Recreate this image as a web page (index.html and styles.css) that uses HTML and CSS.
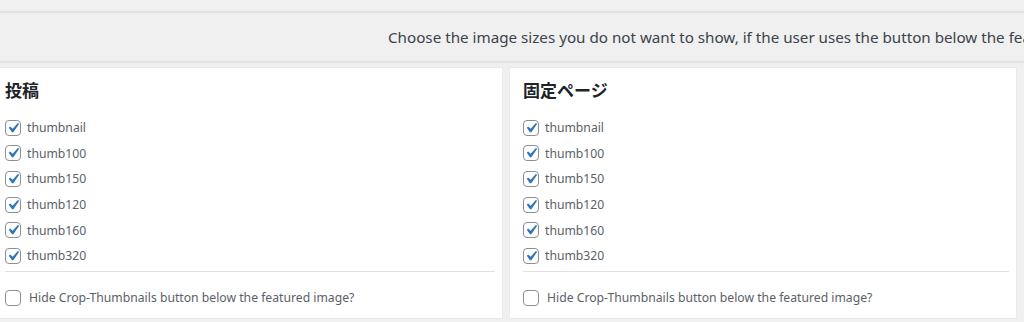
FILE: index.html
```html
<!DOCTYPE html>
<html lang="ja">
<head>
    <meta charset="UTF-8">
    <title>Crop-Thumbnails</title>
    <link rel="stylesheet" href="styles.css">
</head>
<body>
    <div class="notice">
        <p>Choose the image sizes you do not want to show, if the user uses the button below the featured image box.</p>
    </div>
    <div class="panels">
        <section class="panel">
            <h2>投稿</h2>
            <ul class="sizes">
                <li><label><input type="checkbox" checked> thumbnail</label></li>
                <li><label><input type="checkbox" checked> thumb100</label></li>
                <li><label><input type="checkbox" checked> thumb150</label></li>
                <li><label><input type="checkbox" checked> thumb120</label></li>
                <li><label><input type="checkbox" checked> thumb160</label></li>
                <li><label><input type="checkbox" checked> thumb320</label></li>
            </ul>
            <div class="hide-row">
                <label><input type="checkbox"> Hide Crop-Thumbnails button below the featured image?</label>
            </div>
        </section>
        <section class="panel">
            <h2>固定ページ</h2>
            <ul class="sizes">
                <li><label><input type="checkbox" checked> thumbnail</label></li>
                <li><label><input type="checkbox" checked> thumb100</label></li>
                <li><label><input type="checkbox" checked> thumb150</label></li>
                <li><label><input type="checkbox" checked> thumb120</label></li>
                <li><label><input type="checkbox" checked> thumb160</label></li>
                <li><label><input type="checkbox" checked> thumb320</label></li>
            </ul>
            <div class="hide-row">
                <label><input type="checkbox"> Hide Crop-Thumbnails button below the featured image?</label>
            </div>
        </section>
    </div>
</body>
</html>
```

FILE: styles.css
```css
body {
    margin: 0;
    background-color: #f0f0f1;
    font-family: "Noto Sans", "Noto Sans CJK JP", sans-serif;
    color: #3c434a;
    overflow: hidden;
}
.notice {
    margin-top: 11px;
    height: 48px;
    border-top: 2px solid #e3e3e5;
    border-bottom: 2px solid #e3e3e5;
    padding-left: 388px;
    display: flex;
    align-items: center;
    white-space: nowrap;
}
.notice p {
    margin: 0;
    font-size: 15.2px;
}
.panels {
    display: grid;
    grid-template-columns: 512px 508px;
    gap: 6px;
    margin: 4px 0 0 -9px;
}
.panel {
    background: #fff;
    border: 1px solid #eaeaec;
    padding: 11px 7px 9px 13px;
    height: 230px;
}
.panel h2 {
    margin: 0 0 12px;
    font-size: 17px;
    line-height: 24px;
    font-weight: bold;
    color: #1d2327;
}
.sizes {
    list-style: none;
    margin: 0;
    padding: 0 0 2px;
    border-bottom: 1px solid #e2e2e4;
}
.sizes li {
    height: 25.6px;
    display: flex;
    align-items: center;
}
label {
    display: flex;
    align-items: center;
    gap: 6px;
    font-size: 12.2px;
    color: #5a6168;
}
.hide-row {
    margin-top: 13px;
    height: 26px;
    display: flex;
    align-items: center;
}
.hide-row label {
    gap: 8px;
}
input[type="checkbox"] {
    appearance: none;
    margin: 0;
    width: 16px;
    height: 16px;
    border: 1px solid #8c8f94;
    border-radius: 4px;
    background: #fff;
    flex: none;
}
input[type="checkbox"]:checked {
    background: #fff url("data:image/svg+xml;utf8,<svg xmlns='http://www.w3.org/2000/svg' viewBox='0 0 20 20'><path fill='%232f76b8' d='M14.83 4.89l1.34.94-5.81 8.38H9.02L5.78 9.67l1.34-1.25 2.57 2.4z'/></svg>") center / 20px 20px no-repeat;
}
```
